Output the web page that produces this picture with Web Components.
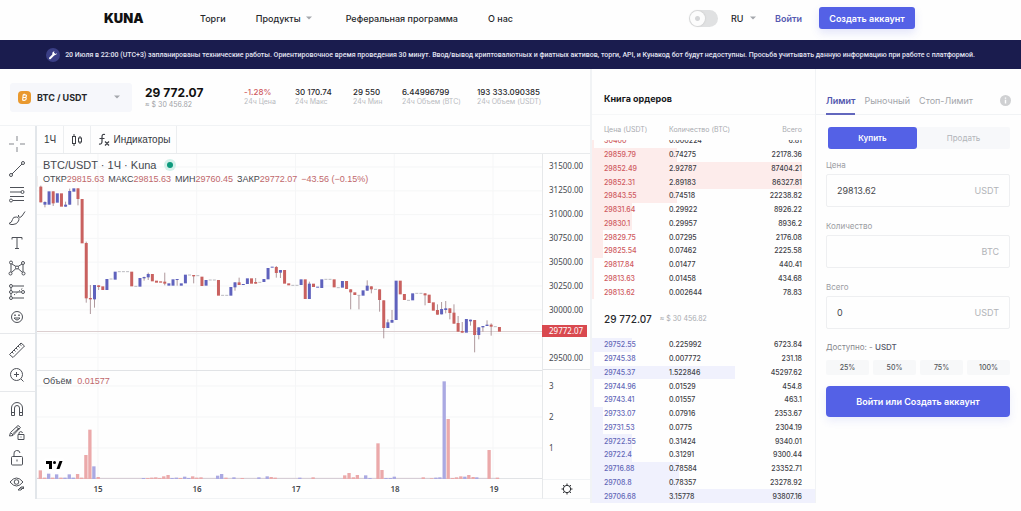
<!DOCTYPE html>
<html lang="ru">
<head>
<meta charset="utf-8">
<meta name="viewport" content="width=device-width, initial-scale=1">
<title>KUNA — BTC / USDT</title>
<style>
  body { margin: 0; background: #fefefe; color: #26272b; font-family: Inter, "Open Sans", sans-serif; font-size: 8px;
    --brand: #5461e6; --line: #f1f3f5; --red: #cf5a60; --blue: #6468b8; --muted: #a9abb0; }
</style>
</head>
<body>
<kuna-app></kuna-app>
<script>
const RESET = `<style>
  *, *::before { box-sizing: border-box; }
  button, input, select { font: inherit; color: inherit; background: none; border: 0; padding: 0; margin: 0; min-width: 0; outline: 0; }
  button, select { cursor: pointer; }
  a { color: inherit; text-decoration: none; }
  svg { display: block; }
  table { border-collapse: collapse; border-spacing: 0; }
  td, th { padding: 0; font-weight: inherit; text-align: left; }
</style>`;
const CARET = `<svg width="6" height="4" viewBox="0 0 6 4" aria-hidden="true"><path d="M0 .5h6L3 3.5z" fill="#a4a7ac"/></svg>`;

function define(name, html, setup) {
  customElements.define(name, class extends HTMLElement {
    constructor() {
      super();
      const t = document.createElement('template');
      t.innerHTML = RESET + html;
      this.attachShadow({ mode: 'open' }).append(t.content.cloneNode(true));
    }
    connectedCallback() { if (setup) setup(this, this.shadowRoot); }
  });
}

define('kuna-header', `
<style>
  :host { display: flex; align-items: center; height: 40px; padding: 0 106px 4px 104px; font-size: 9px; font-weight: 500; }
  .logo { font-size: 13px; font-weight: 900; color: #111; width: 96px; }
  nav { display: flex; align-items: center; gap: 30px; }
  nav button { display: flex; align-items: center; gap: 5px; margin-right: 4px; }
  .right { display: flex; align-items: center; margin-left: auto; }
  .switch { appearance: none; width: 29px; height: 17px; border-radius: 9px; background: #e0e1e2; margin-right: 13px; }
  .switch::before { content: ""; display: block; width: 15px; height: 15px; margin: 1px; border-radius: 50%; background: radial-gradient(#d5d6d8 0 2px, #fcfcfc 3px); box-shadow: 0 0 2px #bbb; }
  .lang { display: flex; align-items: center; }
  .lang select { appearance: none; width: 19px; }
  .login { font-weight: 600; margin: 0 17px 0 19px; color: #5558b0; }
  .signup { width: 96px; height: 22px; border-radius: 3px; background: var(--brand); color: #fff; font-weight: 600; box-shadow: 0 4px 8px #5461e628; }
</style>
<a class="logo" href="#">KUNA</a>
<nav><a href="#">Торги</a><button>Продукты ${CARET}</button><a href="#">Реферальная программа</a><a href="#">О нас</a></nav>
<div class="right">
  <input class="switch" type="checkbox" aria-label="Тёмная тема">
  <label class="lang"><select aria-label="Язык"><option>RU</option></select>${CARET}</label>
  <a class="login" href="#">Войти</a>
  <button class="signup">Создать аккаунт</button>
</div>`);

define('kuna-notice', `
<style>
  :host { display: flex; align-items: center; justify-content: center; gap: 5px; height: 29px; background: #1a1c4e; color: #e3e4f2; font: 500 7px Roboto, "Open Sans", sans-serif; white-space: nowrap; }
</style>
<svg width="14" height="14" viewBox="0 0 14 14" aria-hidden="true"><circle cx="7" cy="7" r="7" fill="#3b3f86"/><path d="M4 10.2 8 6.2" stroke="#fff" stroke-width="2" stroke-linecap="round"/><path d="M10.9 4.9 9.5 6.1 8 5 8.4 3.3A2.6 2.6 0 0 0 6.4 6.4 2.6 2.6 0 0 0 10.9 4.9z" fill="#fff"/></svg>
<span><slot></slot></span>`);

define('stat-item', `
<style>
  :host { display: block; font-size: 8px; line-height: 10px; font-weight: 500; white-space: nowrap; }
  :host([down]) b { color: var(--red); }
  b { display: block; font-weight: 500; }
  small { display: block; font-size: 7px; font-weight: 400; color: #b9bbbf; }
</style>
<b><slot></slot></b><small><slot name="label"></slot></small>`);

define('market-ticker', `
<style>
  :host { display: flex; align-items: center; height: 57px; padding: 0 10px; border-bottom: 1px solid var(--line); }
  .pair { display: flex; align-items: center; width: 122px; height: 29px; padding: 0 12px 0 8px; border-radius: 3px; background: #f6f7fb; margin-right: 13px; }
  .pair select { appearance: none; flex: 1; margin-left: 6px; font-size: 9px; font-weight: 700; }
  .last { width: 99px; font-size: 12px; line-height: 14px; font-weight: 700; color: #111; }
  .last small { display: block; font-size: 7px; line-height: 9px; font-weight: 400; color: #a0a2a6; }
  .stats { display: grid; grid-template-columns: 51px 58px 49px 75px auto; }
</style>
<label class="pair">
  <svg width="13" height="13" viewBox="0 0 13 13" aria-hidden="true"><rect width="13" height="13" rx="4" fill="#e9992f"/><path d="M5.2 3.6 4.6 9.4M5 3.9h2.2q1.4 0 1.2 1.3T6.8 6.5H4.9h2.3q1.2.1 1 1.3T6.6 9.2H4.2M6.3 2.8v1M6 9v1" stroke="#fff" stroke-width="1.1" fill="none"/></svg>
  <select aria-label="Рынок"><option>BTC / USDT</option></select>${CARET}
</label>
<div class="last">29 772.07<small>≈ $ 30 456.82</small></div>
<div class="stats">
  <stat-item down>-1.28%<span slot="label">24ч Цена</span></stat-item>
  <stat-item>30 170.74<span slot="label">24ч Макс</span></stat-item>
  <stat-item>29 550<span slot="label">24ч Мин</span></stat-item>
  <stat-item>6.44996799<span slot="label">24ч Объем (BTC)</span></stat-item>
  <stat-item>193 333.090385<span slot="label">24ч Объем (USDT)</span></stat-item>
</div>`);

const TOOLS = [
  [['Перекрестие', '<path d="M9 1v5M9 12v5M1 9h5M12 9h5" stroke="#84878d"/>'],
   ['Линия тренда', '<circle cx="3" cy="15" r="1.5"/><circle cx="15" cy="3" r="1.5"/><path d="M4 14 14 4"/>'],
   ['Фибоначчи', '<path d="M2 2.5h14M2 7h11M2 11.500h14M5 15.500h11"/><circle cx="14.500" cy="7" r="1.500"/><circle cx="3" cy="15.500" r="1.500"/>'],
   ['Кисть', '<path d="M1 14.500q3-1 3.500-4t4-2.500 2 4T5 15.500q-2 .5-4-1zM10 7q2 3 4 0l3-4.500M10 7l1-1"/>'],
   ['Текст', '<path d="M4 5.500V3.500h10v2M9 3.500v11M7 14.500h4"/>'],
   ['Фигуры', '<circle cx="3" cy="3.500" r="1.500"/><circle cx="15" cy="4" r="1.500"/><circle cx="9" cy="8.500" r="1.500"/><circle cx="2.500" cy="14.500" r="1.500"/><circle cx="15.500" cy="14.500" r="1.500"/><path d="M3 5v8M4 5l4 2.500M10 7.500l4-2.500M15 5.500V13M8 9.500l-4.500 4M10 9.500l4.500 4"/>'],
   ['Прогноз', '<path d="M5 3h11M5 9h8M5 15h11M3 4.500v3M3 10.500v3"/><path d="M6 12 15 5" stroke-dasharray="1.500 1.500"/><circle cx="3" cy="3" r="1.500"/><circle cx="3" cy="9" r="1.500"/><circle cx="3" cy="15" r="1.500"/><circle cx="15" cy="9" r="1.500"/>'],
   ['Смайлы', '<circle cx="9" cy="9" r="5.500"/><path d="M6 10q3 4 6 0z"/><path d="M7 6.500v1.500M11 6.500v1.500" stroke-width="1.500"/>']],
  [['Линейка', '<path d="M1.500 13.500 13 2l3.500 3L5 16.500zM4 11l1.500 1.500M6 9l1.500 1.500M8 7l1.500 1.500M10 5l1.500 1.500M12 3.500l1.500 1.200"/>'],
   ['Увеличить', '<circle cx="8.500" cy="8.500" r="6"/><path d="m13 13 2.500 2.500M6 8.500h5M8.500 6v5"/>']],
  [['Магнит', '<path d="M3.500 15.500V8a5.500 5.500 0 0 1 11 0v7.500h-3V8a2.500 2.500 0 0 0-5 0v7.500zM3.500 12.500h3M11.500 12.500h3"/>'],
   ['Режим рисования', '<path d="m1.500 12 1-3.500L10 1.500l2.500 2L5 11.500zM8.500 3l2.500 2.500M3 9l2 2M4.500 10 11 4M10 10.500h6v5h-6zM11 10.500V9a1.800 1.800 0 0 1 3.500 0M13 12.500v1"/>'],
   ['Блокировка', '<rect x="3.500" y="7.500" width="11" height="8.500" rx="1"/><path d="M6 7.500V5a3 3 0 0 1 6-1M9 10.500v2"/>'],
   ['Скрыть', '<path d="M2 8q6.500-8 13 0-6.500 8-13 0z"/><circle cx="8.500" cy="8" r="2.300"/><path d="m10 16 3-3h3l-3 3zM12 14l4 .5"/>']]
];
define('drawing-tools', `
<style>
  :host { display: flex; flex-direction: column; border-right: 2px solid #e2e6ea; color: #4d5057; }
  section { display: flex; flex-direction: column; padding: 4px 2px 4px 0; border-bottom: 1px solid #e6e8eb; }
  section:nth-of-type(1) { flex: 8; padding-top: 6px; }
  section:nth-of-type(2) { flex: 2; }
  section:nth-of-type(3) { flex: 4; border: 0; }
  button { flex: 1; display: grid; place-items: center; }
</style>`, (el, root) => {
  for (const group of TOOLS) {
    const s = document.createElement('section');
    s.innerHTML = group.map(([n, p]) => `<button aria-label="${n}"><svg width="18" height="18" viewBox="0 0 18 18" fill="none" stroke="currentColor" stroke-width="1">${p}</svg></button>`).join('');
    root.append(s);
  }
});

/* Hourly candles: direction (r, b, or - for a flat hour), body top, body bottom, wick top, wick bottom. */
const CANDLES = `r 168 168 168 200|r 200 247 197 247|b 246 254 244 262|b 214 254|r 214 250 214 258|b 220 248|r 220 260|b 254 260 245 260|b 213 254 206 254|b 205 215|r 205 237 205 256|r 237 370|r 369 535 365 548|r 534 538 495 582|b 495 538 495 563|r 496 501 496 510|r 499 510|b 477 510|- 477|b 455 479|- 455|- 455|- 455|r 455 499|- 499|b 474 500|b 471 475 470 482|b 462 472 458 480|r 462 484|r 482 488|r 484 488|r 485 491 458 496|b 490 497|b 478 497|b 477 480 477 497|b 490 497|b 464 490|- 465|r 465 469 465 490|- 467|r 470 498|b 480 497|- 480|- 480|r 480 527|- 526|- 526|b 501 527|b 487 502 487 512|r 487 495 473 495|b 492 495|b 475 492|r 475 491|r 486 491 474 491|- 487|b 477 486|b 444 478|b 440 443|r 441 459 438 473|b 450 458 450 474|r 450 491|r 490 496|- 496|- 496|b 478 495|r 478 537|b 491 537 485 537|r 491 501|b 500 503|b 478 504|- 478|- 478|r 478 502|- 503|b 483 503|r 483 507|r 508 517 508 568|r 517 525|- 526 526 526 568|b 511 527|b 497 512 481 512|r 499 508 499 520|- 508|r 508 540 508 575|r 541 624 541 655|b 607 624 598 624|b 600 608 570 608|b 482 600|r 482 523|r 522 540|- 541|b 520 541|- 520|- 520|r 520 526 520 556|r 524 549|r 547 572|r 570 584 553 584|b 567 583 546 583|b 565 570 543 580|r 565 579 565 598|r 578 611 553 611|r 609 635 588 635|r 633 638 606 638|b 597 638|b 599 604 599 617|r 600 645 600 697|b 622 645 622 658|b 618 622 618 635|b 614 618 601 618|r 614 620 610 647|- 620|r 621 635`
  .split('|').map(s => s.split(' '));
/* Volume bars: x, height, direction. */
const VOLUMES = [[10,26,'r'],[23,4,'r'],[35,16,'b'],[47,4,'r'],[59,14,'b'],[72,4,'r'],[84,4,'b'],[97,14,'b'],[109,4,'b'],[122,15,'r'],[134,4,'r'],[147,72,'r'],[159,148,'r'],[171,38,'b'],[184,6,'r'],
  [320,3,'b'],[333,3,'r'],[345,4,'r'],[357,5,'r'],[369,3,'r'],[381,8,'r'],[394,12,'r'],[406,3,'b'],[419,4,'b'],[431,3,'r'],[444,7,'b'],[456,3,'b'],[468,8,'r'],[480,4,'r'],[493,5,'r'],[543,10,'b'],[555,15,'b'],[568,4,'r'],[592,5,'b'],[617,3,'r'],[667,5,'b'],[692,8,'b'],[704,6,'r'],[716,4,'r'],[790,4,'b'],[830,5,'r'],
  [925,11,'r'],[938,18,'r'],[951,5,'r'],[963,12,'r'],[988,11,'b'],[1001,3,'b'],[1025,107,'r'],[1037,27,'r'],[1049,3,'b'],[1062,3,'b'],[1074,7,'b'],[1161,5,'r'],[1186,2,'r'],[1199,4,'b'],[1211,5,'b'],[1224,293,'b'],[1236,180,'r'],[1249,3,'r'],[1261,5,'r'],[1274,8,'r'],[1286,7,'b'],[1298,12,'r'],[1311,6,'r'],[1322,5,'b'],[1359,87,'r'],[1384,4,'r']];

function drawPlot() {
  const fill = { r: '#c9615f', b: '#5f62bd' }, pale = { r: '#eba9aa', b: '#aaa9e2' };
  let s = '';
  for (let i = 0; i < 5; i++) s += `<path d="M${183 + i * 297} 102V1077"/>`;
  for (let i = 0; i < 9; i++) s += `<path d="M0 ${141 + i * 71.4}H1518"/>`;
  for (let i = 0; i < 3; i++) s += `<path d="M0 ${798 + i * 93}H1518"/>`;
  s = `<g stroke="#f5f6f7" stroke-width="3">${s}</g><path d="M0 751.5H1518M0 1075.500H1518" stroke="#e1e3e6" stroke-width="3"/><path d="M0 634.500H1518" stroke="#dccfd0" stroke-width="3"/>`;
  CANDLES.forEach(([d, t, b, wt, wb], i) => {
    const x = -1 + i * 12.42;
    if (wt) s += `<path d="M${x} ${wt}V${wb}" stroke="#9b7f84" stroke-width="2.400"/>`;
    if (d === '-') s += `<path d="M${x - 4.5} ${t}h9" stroke="#a9aab0" stroke-width="2.400"/>`;
    else s += `<rect x="${x - 4.5}" y="${t}" width="9" height="${b - t}" fill="${fill[d]}"/>`;
  });
  s += `<path d="M0 1075H1390" stroke="#cdbcc9" stroke-width="2"/>`;
  for (const [x, h, d] of VOLUMES) s += `<rect x="${x - 5}" y="${1077 - h}" width="10" height="${h}" fill="${pale[d]}"/>`;
  return s;
}

define('price-chart', `
<style>
  :host { display: grid; grid-template: 28px 325px 20px / minmax(0, 1fr) 47px; color: #45484e; font-family: "Liberation Sans", Arial, sans-serif; }
  .bar { grid-column: 1 / 3; display: flex; border-bottom: 1px solid #e9ebed; font-size: 10px; color: #36393f; }
  .bar button { display: flex; align-items: center; justify-content: center; gap: 4px; border-right: 1px solid #eceef0; width: 27px; }
  .bar button:last-child { width: 86px; }
  .plot { position: relative; border-right: 1px solid #e6e8ea; }
  .plot > svg { width: 100%; height: 100%; }
  .over { position: absolute; left: 6px; white-space: nowrap; }
  .title { top: 4px; font-size: 11px; line-height: 14px; }
  .title i { display: inline-block; width: 6px; height: 6px; margin-left: 10px; border-radius: 50%; background: #0d9a7d; box-shadow: 0 0 0 3px #d3f1ea; vertical-align: 1px; }
  .ohlc { top: 20px; font-size: 9px; line-height: 11px; display: flex; gap: 4px; }
  .ohlc b, .vol b { font-weight: 400; color: #c0686c; }
  .vol { top: 222px; font-size: 9px; line-height: 11px; }
  .vol b { margin-left: 3px; }
  .plot > .tv { width: 26px; height: 14px; bottom: 7px; left: 4px; }
  .axis { position: relative; font-family: "Noto Sans", sans-serif; font-size: 8px; }
  .prices { display: flex; flex-direction: column; height: 215px; }
  .prices span { flex: 1; display: flex; align-items: center; padding-left: 6px; }
  .vols { display: grid; grid-auto-rows: 31px; align-items: center; border-top: 1px solid #e1e3e6; padding-left: 6px; }
  .tag { position: absolute; left: -1px; right: 3px; top: 171px; height: 12px; line-height: 12px; padding-left: 7px; background: #d9494f; color: #fff; }
  .time { display: grid; grid-template-columns: 2.3% repeat(5, 19.6%); align-items: center; text-align: center; font: 600 8px "Noto Sans", sans-serif; border-right: 1px solid #e6e8ea; border-bottom: 1px solid var(--line); }
  .gear { display: grid; place-items: center; border-bottom: 1px solid var(--line); border-top: 1px solid var(--line); }
</style>
<div class="bar">
  <button>1Ч</button>
  <button aria-label="Свечи"><svg width="14" height="14" viewBox="0 0 14 14" fill="none" stroke="#3c3f45"><rect x="2.500" y="3.500" width="3" height="7"/><path d="M4 1v2.500M4 10.500V13M10 3v2M10 9v2"/><rect x="8.500" y="5" width="3" height="4"/></svg></button>
  <button><svg width="13" height="13" viewBox="0 0 13 13" fill="none" stroke="#3c3f45" stroke-width="1.200" aria-hidden="true"><path d="M8 1.500Q5 .5 5 4v4.500Q5 11.500 2 11M2.500 5.500h5M8 8.500l4 4M12 8.500l-4 4"/></svg>Индикаторы</button>
</div>
<div class="plot">
  <svg viewBox="0 102 1518 975" preserveAspectRatio="none" aria-hidden="true">${drawPlot()}</svg>
  <div class="over title">BTC/USDT · 1Ч · Kuna<i></i></div>
  <div class="over ohlc"><span>ОТКР<b>29815.63</b></span><span>МАКС<b>29815.63</b></span><span>МИН<b>29760.45</b></span><span>ЗАКР<b>29772.07</b></span><b>−43.56 (−0.15%)</b></div>
  <div class="over vol">Объём <b>0.01577</b></div>
  <svg class="over tv" viewBox="0 0 26 14" aria-hidden="true"><rect width="26" height="14" rx="7" fill="#fff"/><path d="M5 3h6v8H8V6H5zM15.500 11 18.500 3H21.500L18.500 11z"/><circle cx="13.500" cy="4.500" r="1.500"/></svg>
</div>
<div class="axis">
  <div class="prices"><span>31500.00</span><span>31250.00</span><span>31000.00</span><span>30750.00</span><span>30500.00</span><span>30250.00</span><span>30000.00</span><span></span><span>29500.00</span></div>
  <div class="vols"><span>3</span><span>2</span><span>1</span></div>
  <div class="tag">29772.07</div>
</div>
<div class="time"><span></span><span>15</span><span>16</span><span>17</span><span>18</span><span>19</span></div>
<div class="gear"><svg width="12" height="12" viewBox="0 0 12 12" fill="none" stroke="#2d2f33" aria-label="Настройки"><circle cx="6" cy="6" r="3.700"/><path d="M6 .5v2M6 9.500v2M.5 6h2M9.500 6h2M2.100 2.100l1.400 1.400M8.500 8.500l1.400 1.400M2.100 9.900l1.400-1.400M8.500 3.500l1.400-1.400"/></svg></div>`);

/* Orders: price, amount, total, depth in percent of the column. */
const ASKS = [['30400','0.000224','6.81',1],['29859.79','0.74275','22178.36',38],['29852.49','2.92787','87404.21',94],['29852.31','2.89183','86327.81',94],['29843.55','0.74518','22238.82',38],['29831.64','0.29922','8926.22',18],['29830.1','0.29957','8936.2',18],['29829.75','0.07295','2176.08',5],['29825.54','0.07462','2225.58',5],['29817.84','0.01477','440.41',1],['29813.63','0.01458','434.68',1],['29813.62','0.002644','78.83',1]];
const BIDS = [['29752.55','0.225992','6723.84',18],['29745.38','0.007772','231.18',1],['29745.37','1.522846','45297.62',64],['29744.96','0.01529','454.8',1],['29743.41','0.01557','463.1',1],['29733.07','0.07916','2353.67',5],['29731.53','0.0775','2304.19',5],['29722.55','0.31424','9340.01',18],['29722.4','0.31291','9300.44',18],['29716.88','0.78584','23352.71',39],['29708.8','0.78357','23278.92',39],['29706.68','3.15778','93807.16',100]];
const orderRows = (list, tint) => list.map(([p, a, t, d]) =>
  `<tr style="background:linear-gradient(90deg, ${tint} ${d}%, transparent ${d}%)"><td>${p}</td><td>${a}</td><td>${t}</td></tr>`).join('');
define('order-book', `
<style>
  :host { display: block; border-left: 2px solid var(--line); }
  h2 { margin: 0; padding: 0 12px; height: 45px; line-height: 60px; font-size: 9px; font-weight: 700; color: #17181b; }
  .head, table { width: 100%; }
  .head { display: grid; grid-template-columns: 65px 1fr auto; align-items: center; height: 26px; padding: 4px 13px 0 12px; border-top: 1px solid #f6f7f8; font-size: 7px; color: var(--muted); }
  table { height: 165px; table-layout: fixed; font-size: 7px; font-weight: 500; color: #3f4147; line-height: 11px; }
  td:nth-child(1) { width: 77px; padding-left: 12px; color: var(--blue); }
  td:nth-child(3) { text-align: right; padding-right: 13px; }
  .asks { display: flex; align-items: flex-end; height: 159px; overflow: hidden; }
  .asks td:nth-child(1) { color: var(--red); }
  .mid { display: flex; align-items: center; gap: 8px; height: 39px; padding-left: 12px; font-size: 10px; font-weight: 500; }
  .mid small { font-size: 7px; font-weight: 400; color: var(--muted); }
</style>
<h2>Книга ордеров</h2>
<div class="head"><span>Цена (USDT)</span><span>Количество (BTC)</span><span>Всего</span></div>
<div class="asks"><table aria-label="Продажа">${orderRows(ASKS, '#fdeceb')}</table></div>
<div class="mid">29 772.07 <small>≈ $ 30 456.82</small></div>
<table aria-label="Покупка">${orderRows(BIDS, '#f0f1fd')}</table>`);

define('amount-field', `
<style>
  :host { display: block; }
  label { display: block; height: 17px; line-height: 17px; font-size: 8px; color: #9b9da2; }
  div { display: flex; align-items: center; height: 33px; padding: 0 10px; border: 1px solid #eeeff1; border-radius: 2px; font-size: 9px; }
  input { flex: 1; width: 0; color: #44464b; }
  span { color: #b2b4b8; }
</style>
<label for="value"><slot></slot></label><div><input id="value"><span><slot name="unit"></slot></span></div>`,
(el, root) => { root.getElementById('value').value = el.getAttribute('value') || ''; });

define('order-form', `
<style>
  :host { display: block; border-left: 1px solid var(--line); }
  .tabs { display: flex; gap: 9px; height: 46px; padding: 0 10px; border-bottom: 1px solid var(--line); align-items: flex-end; font-size: 9px; color: #a3a5aa; }
  .tabs button { height: 27px; border-bottom: 2px solid transparent; margin-bottom: -1px; }
  .tabs button.on { color: #5055ad; font-weight: 600; border-color: #6267bd; }
  .tabs svg { margin: 0 0 8px auto; }
  .body { padding: 12px 11px 0 10px; display: grid; grid-template-columns: minmax(0, 1fr); gap: 10px; }
  .side { display: grid; grid-template-columns: 89px 1fr; margin-left: 2px; height: 22px; border-radius: 2px; background: #f7f8fa; font-size: 8px; color: #b2b4b9; }
  .side .on { background: var(--brand); color: #fff; font-weight: 600; border-radius: 3px; }
  .fields { display: grid; gap: 11px; margin-top: -2px; }
  .free { line-height: 10px; font-size: 8px; color: #85878c; margin-top: 3px; }
  .free b { font-weight: 500; color: #55576a; }
  .share { display: grid; grid-template-columns: repeat(4, 1fr); gap: 4px; margin-top: -2px; }
  .share button { height: 15px; background: #f7f8f9; border-radius: 2px; font-size: 7px; font-weight: 500; color: #55575c; }
  .submit { height: 31px; border-radius: 4px; background: var(--brand); color: #fff; font-size: 9px; font-weight: 600; box-shadow: 0 4px 8px #5461e61c; margin-top: 1px; }
</style>
<div class="tabs"><button class="on">Лимит</button><button>Рыночный</button><button>Стоп-Лимит</button>
  <svg width="11" height="11" viewBox="0 0 11 11" aria-hidden="true"><circle cx="5.500" cy="5.500" r="5.500" fill="#cfd0d2"/><path d="M5.500 2.500v1.300M5.500 4.800v3.700" stroke="#fff" stroke-width="1.400"/></svg></div>
<div class="body">
  <div class="side"><button class="on">Купить</button><button>Продать</button></div>
  <div class="fields">
    <amount-field value="29813.62">Цена<span slot="unit">USDT</span></amount-field>
    <amount-field>Количество<span slot="unit">BTC</span></amount-field>
    <amount-field value="0">Всего<span slot="unit">USDT</span></amount-field>
  </div>
  <div class="free">Доступно: - <b>USDT</b></div>
  <div class="share"><button>25%</button><button>50%</button><button>75%</button><button>100%</button></div>
  <button class="submit">Войти или Создать аккаунт</button>
</div>`);

define('kuna-app', `
<style>
  :host { display: block; }
  main { display: grid; grid-template-columns: minmax(0, 1fr) 225px 206px; }
  .work { display: grid; grid-template-columns: 37px minmax(0, 1fr); }
</style>
<kuna-header></kuna-header>
<kuna-notice>20 Июля в 22:00 (UTC+3) запланированы технические работы. Ориентировочное время проведения 30 минут. Ввод/вывод криптовалютных и фиатных активов, торги, API, и Кунакод бот будут недоступны. Просьба учитывать данную информацию при работе с платформой.</kuna-notice>
<main>
  <div>
    <market-ticker></market-ticker>
    <div class="work"><drawing-tools></drawing-tools><price-chart></price-chart></div>
  </div>
  <order-book></order-book>
  <order-form></order-form>
</main>`);
</script>
</body>
</html>
